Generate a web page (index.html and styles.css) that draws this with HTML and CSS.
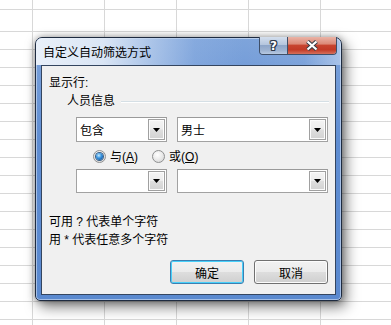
FILE: index.html
```html
<!DOCTYPE html>
<html lang="zh-CN">
<head>
<meta charset="utf-8">
<title>自定义自动筛选方式</title>
<link rel="stylesheet" href="styles.css">
</head>
<body>
<div class="dialog">
  <div class="titlebar">
    <span class="title">自定义自动筛选方式</span>
    <div class="caption">
      <span class="cap-btn help">?</span>
      <span class="cap-btn close">
        <svg width="14" height="11" viewBox="0 0 14 11">
          <path d="M2.5 1.5 L11.5 9.5 M11.5 1.5 L2.5 9.5" stroke="#3a3f48" stroke-width="4.2" fill="none"/>
          <path d="M2.5 1.5 L11.5 9.5 M11.5 1.5 L2.5 9.5" stroke="#ffffff" stroke-width="2.2" fill="none"/>
        </svg>
      </span>
    </div>
  </div>
  <div class="frame">
    <div class="client">
      <div class="section-label">显示行<span class="latin">:</span></div>
      <div class="group"><span>人员信息</span><span class="rule"></span></div>
      <div class="combo-row">
        <div class="combo small"><span class="value">包含</span><span class="drop"><svg width="7" height="4" viewBox="0 0 7 4"><path d="M0 0 H7 L3.5 4 Z" fill="#000"/></svg></span></div>
        <div class="combo large"><span class="value">男士</span><span class="drop"><svg width="7" height="4" viewBox="0 0 7 4"><path d="M0 0 H7 L3.5 4 Z" fill="#000"/></svg></span></div>
      </div>
      <div class="radio-row">
        <span class="opt"><span class="radio on"></span><span>与<span class="latin">(<u>A</u>)</span></span></span>
        <span class="opt"><span class="radio"></span><span>或<span class="latin">(<u>O</u>)</span></span></span>
      </div>
      <div class="combo-row second">
        <div class="combo small"><span class="value"></span><span class="drop"><svg width="7" height="4" viewBox="0 0 7 4"><path d="M0 0 H7 L3.5 4 Z" fill="#000"/></svg></span></div>
        <div class="combo large"><span class="value"></span><span class="drop"><svg width="7" height="4" viewBox="0 0 7 4"><path d="M0 0 H7 L3.5 4 Z" fill="#000"/></svg></span></div>
      </div>
      <p class="hint first">可用<span class="latin"> ? </span>代表单个字符</p>
      <p class="hint">用<span class="latin"> * </span>代表任意多个字符</p>
      <div class="actions">
        <button class="btn default">确定</button>
        <button class="btn">取消</button>
      </div>
    </div>
  </div>
</div>
</body>
</html>
```
FILE: styles.css
```css
html, body {
  margin: 0;
  padding: 0;
}
body {
  width: 391px;
  height: 325px;
  overflow: hidden;
  position: relative;
  font-family: "Noto Sans CJK SC", sans-serif;
  font-size: 12px;
  color: #000;
  background:
    linear-gradient(#d8d8d8, #d8d8d8) 0 9px / 100% 1px no-repeat,
    repeating-linear-gradient(180deg, #d8d8d8 0 1px, transparent 1px 18px) 0 31px / 100% 300px no-repeat,
    repeating-linear-gradient(90deg, #d8d8d8 0 1px, transparent 1px 72px) 32px 0 / 100% 100% no-repeat,
    #ffffff;
}

.latin {
  font-family: "Liberation Sans", "DejaVu Sans", sans-serif;
}

.dialog {
  position: absolute;
  left: 35px;
  top: 37px;
  width: 307px;
  height: 264px;
  box-sizing: border-box;
  border: 1px solid #1e2b40;
  border-radius: 7px 7px 5px 5px;
  background: linear-gradient(180deg, #7ea4db 0%, #5f8dd2 40%, #5a89cf 100%);
  box-shadow:
    inset 0 0 0 1px rgba(255, 255, 255, 0.45),
    0 0 7px rgba(0, 0, 0, 0.35),
    4px 6px 14px rgba(0, 0, 0, 0.5);
  display: flex;
  flex-direction: column;
}

.titlebar {
  height: 27px;
  display: flex;
  align-items: flex-start;
  padding: 0 4px 0 7px;
  border-radius: 6px 6px 0 0;
  background: linear-gradient(90deg,
    rgba(236, 242, 250, 0.97) 0%,
    rgba(226, 235, 247, 0.92) 22%,
    rgba(190, 210, 238, 0.7) 38%,
    rgba(150, 182, 228, 0.35) 52%,
    rgba(255, 255, 255, 0) 68%,
    rgba(255, 255, 255, 0.05) 88%,
    rgba(220, 232, 248, 0.5) 100%);
}

.title {
  line-height: 27px;
  white-space: nowrap;
  flex: 1;
}

.caption {
  display: flex;
  margin-top: -1px;
  height: 18px;
  border: 1px solid #3f4f68;
  border-top: none;
  border-radius: 0 0 4px 4px;
  overflow: hidden;
  box-sizing: border-box;
}

.cap-btn {
  display: flex;
  align-items: center;
  justify-content: center;
  height: 100%;
}

.help {
  width: 28px;
  border-right: 1px solid #3f4f68;
  background: linear-gradient(180deg, #d3deed 0%, #b5c6de 45%, #8ea6c9 50%, #9fb4d2 80%, #b8c9e1 100%);
  color: #fff;
  font-family: "DejaVu Sans", sans-serif;
  font-weight: bold;
  font-size: 12px;
  line-height: 1;
  padding-top: 1px;
  box-sizing: border-box;
  text-shadow:
    1px 0 0 #2f3a4c, -1px 0 0 #2f3a4c, 0 1px 0 #2f3a4c, 0 -1px 0 #2f3a4c,
    1px 1px 0 #2f3a4c, -1px -1px 0 #2f3a4c, 1px -1px 0 #2f3a4c, -1px 1px 0 #2f3a4c;
}

.close {
  width: 48px;
  background: linear-gradient(180deg, #eab3a6 0%, #dc8a78 40%, #c7442f 50%, #c23a26 75%, #d5705c 100%);
}

.frame {
  flex: 1;
  padding: 0 5px 5px 5px;
  display: flex;
}

.client {
  flex: 1;
  box-sizing: border-box;
  border: 1px solid #34455f;
  background: #f0f0f0;
  padding: 8px 7px 0 7px;
  display: flex;
  flex-direction: column;
}

.section-label {
  line-height: 16px;
  height: 16px;
}

.group {
  margin-top: 2px;
  height: 16px;
  line-height: 16px;
  padding-left: 18px;
  display: flex;
  align-items: center;
}

.rule {
  flex: 1;
  height: 1px;
  margin-left: 6px;
  margin-right: -1px;
  margin-top: 2px;
  background: #d5dfe5;
  box-shadow: 0 1px 0 #fff;
}

.combo-row {
  margin-top: 9px;
  height: 25px;
  display: flex;
  padding-left: 27px;
  gap: 10px;
}

.combo-row.second {
  margin-top: 6px;
  height: 24px;
}

.combo {
  box-sizing: border-box;
  height: 100%;
  border: 1px solid #a2a2a2;
  border-top-color: #9a9a9a;
  background: #fff;
  display: flex;
  padding: 1px;
}

.combo.small { width: 91px; }
.combo.large { width: 151px; }

.value {
  flex: 1;
  padding-left: 2px;
  display: flex;
  align-items: center;
}

.drop {
  width: 17px;
  box-sizing: border-box;
  border: 1px solid #a0a0a0;
  box-shadow: inset 0 0 0 1px #fbfbfb;
  background: linear-gradient(180deg, #f4f4f4 0%, #ececec 48%, #dedede 52%, #d2d2d2 100%);
  display: flex;
  align-items: center;
  justify-content: center;
}

.drop svg { display: block; }

.radio-row {
  margin-top: 8px;
  height: 13px;
  display: flex;
  align-items: center;
  padding-left: 44px;
  gap: 14px;
}

.opt {
  display: flex;
  align-items: center;
  gap: 4px;
  line-height: 13px;
}

.opt u { text-decoration: underline; }

.radio {
  width: 13px;
  height: 13px;
  box-sizing: border-box;
  border-radius: 50%;
  border: 1px solid #8f9091;
  background: radial-gradient(circle at 40% 35%, #ffffff 0%, #ececec 45%, #d0d0d0 100%);
  display: flex;
  align-items: center;
  justify-content: center;
}

.radio.on::after {
  content: "";
  width: 7px;
  height: 7px;
  border-radius: 50%;
  background: radial-gradient(circle at 40% 35%, #c7ecff 0%, #3d97e0 40%, #0f5aa8 80%, #0b427e 100%);
  box-shadow: 0 0 0 1px #3a5f85;
}

.hint {
  margin: 0;
  line-height: 18px;
  height: 18px;
  white-space: pre;
}

.hint.first { margin-top: 19px; }

.actions {
  margin-top: 12px;
  display: flex;
  justify-content: flex-end;
  gap: 10px;
}

.btn {
  width: 74px;
  height: 24px;
  box-sizing: border-box;
  border: 1px solid #707070;
  border-radius: 3px;
  background: linear-gradient(180deg, #f2f2f2 0%, #ebebeb 48%, #dddddd 52%, #cfcfcf 100%);
  box-shadow: inset 0 0 0 1px #fcfcfc;
  font-family: "Noto Sans CJK SC", sans-serif;
  font-size: 12px;
  color: #000;
  padding: 0;
}

.btn.default {
  border-color: #3c7fb1;
  box-shadow: inset 0 0 0 1px #48d0fa;
}
```
